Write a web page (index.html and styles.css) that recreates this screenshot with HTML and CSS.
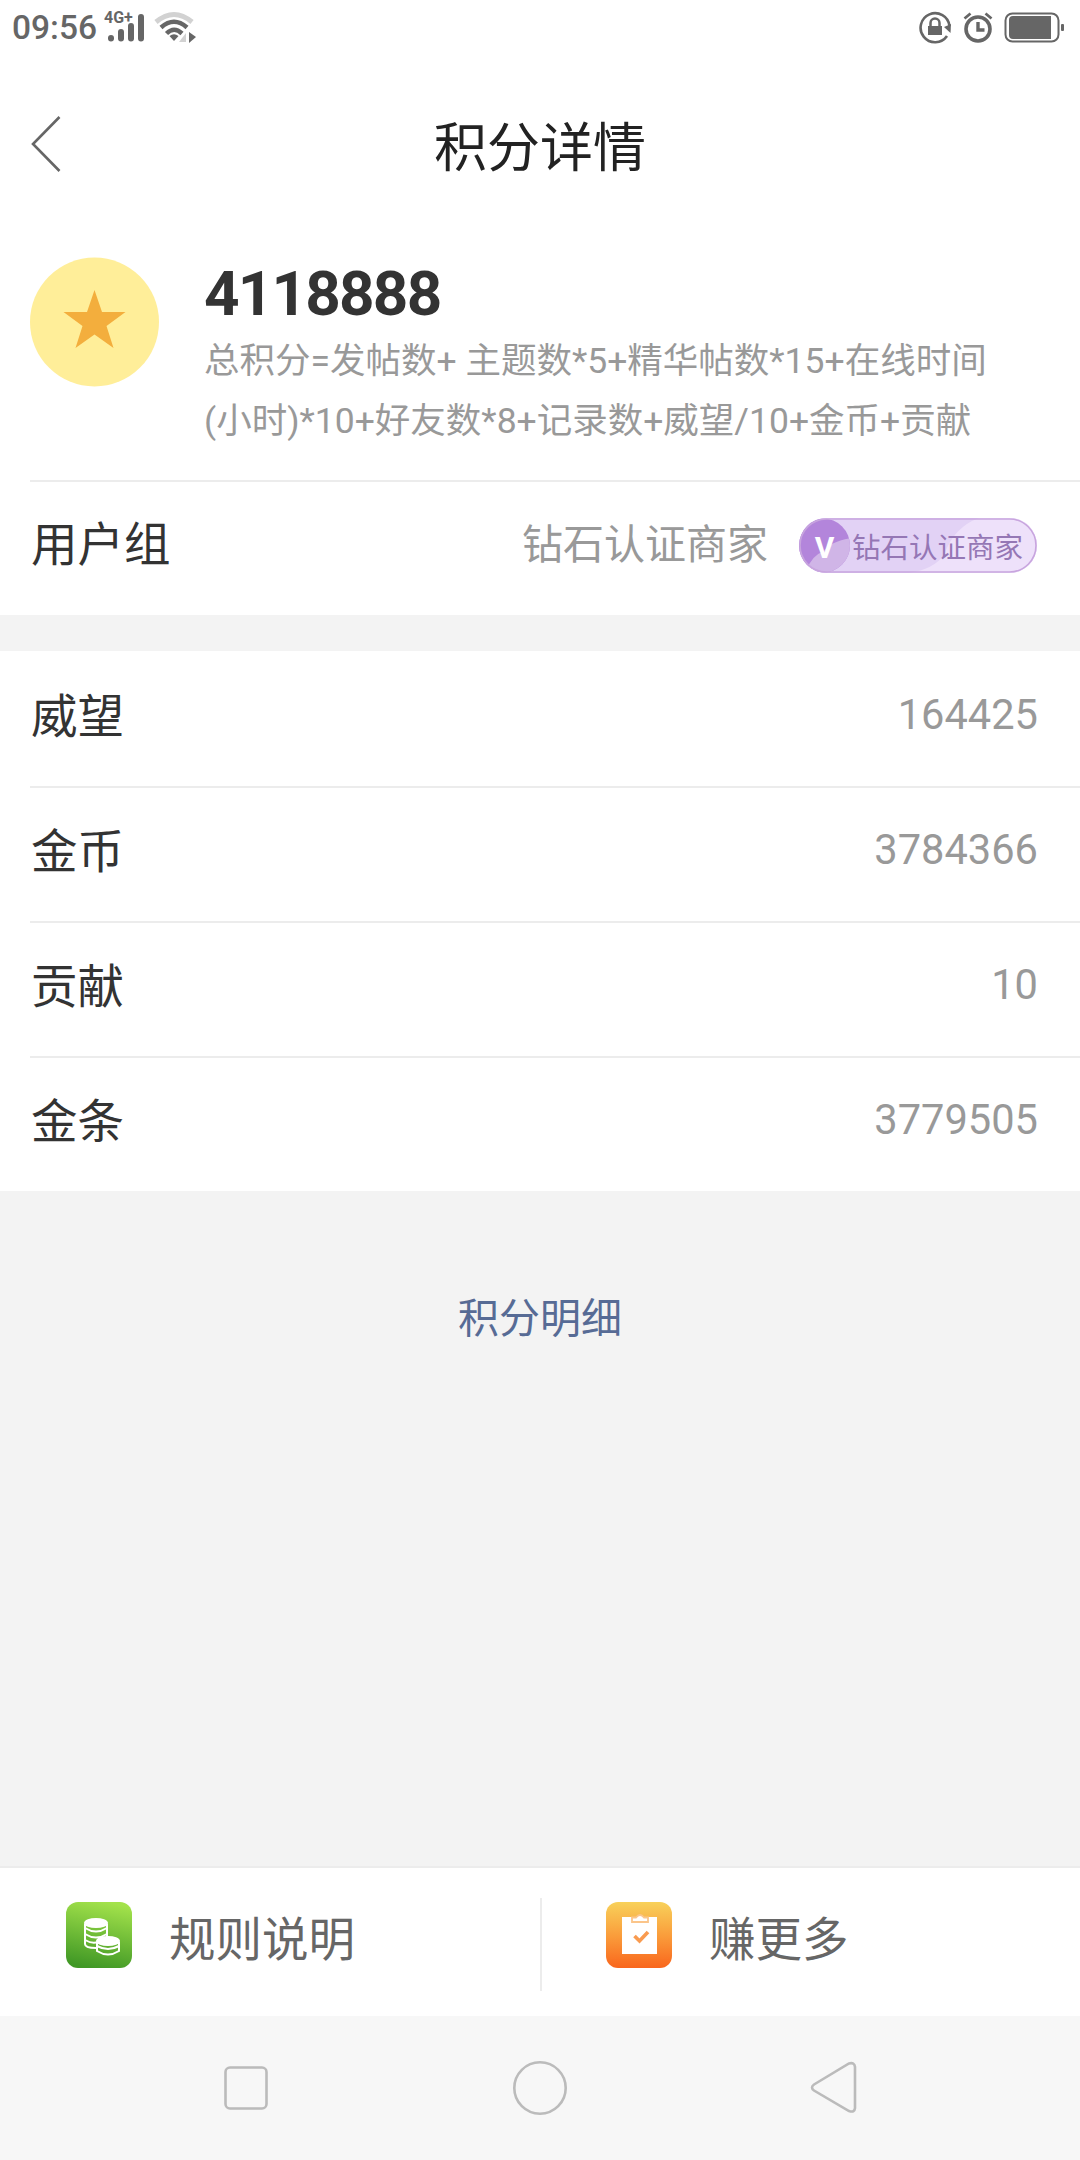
FILE: index.html
```
<!DOCTYPE html>
<html lang="zh-CN">
<head>
    <meta charset="UTF-8">
    <meta name="viewport" content="width=device-width, initial-scale=1.0">
    <title>积分详情</title>
    <link rel="stylesheet" href="styles.css">
</head>
<body>
    <div class="status-bar">
        <span class="time">09:56</span>
        <svg class="signal" width="46" height="46" viewBox="-2 -6 46 46">
            <text x="-1" y="12" class="net">4G+</text>
            <g stroke="#666" stroke-width="6" stroke-linecap="round">
                <path d="M6 27v.5M16 21v6.500M26 15v12.500M36 6v21.500"/>
            </g>
        </svg>
        <svg class="wifi" width="42" height="34" viewBox="0 0 42 34" fill="none">
            <path d="M2 11Q20 -4 38 11" stroke="#d2d2d2" stroke-width="5"/>
            <path d="M7 16.500Q20 5 33 16.500M12.500 22.500Q20 15 28 22.500" stroke="#666" stroke-width="4.500"/>
            <path d="M15.500 25Q20 21.500 24.500 25L20 30z" fill="#666"/>
            <path d="M25 31l7-9v9z" fill="#d2d2d2"/>
            <path d="M35 21l7 5-7 6z" fill="#666"/>
        </svg>
        <span class="space"></span>
        <svg class="lock" width="34" height="34" viewBox="0 0 34 34" fill="none">
            <path d="M29 25A14.500 14.500 0 1 1 31.500 15" stroke="#666" stroke-width="2.600"/>
            <path d="M26 16l6.500 6 .5-9z" fill="#666"/>
            <path d="M10 15h14v9H10z" fill="#666"/>
            <path d="M12.500 15v-3a4.500 4.500 0 0 1 9 0v3" stroke="#666" stroke-width="2.500"/>
        </svg>
        <svg class="alarm" width="30" height="34" viewBox="0 0 30 34" fill="none" stroke="#666">
            <circle cx="15" cy="18" r="12" stroke-width="3.600"/>
            <path d="M15 11v8h6.500" stroke-width="3.400"/>
            <path d="M1.500 7.500l6-5M28.500 7.500l-6-5" stroke-width="2.800"/>
        </svg>
        <svg class="battery" width="60" height="32" viewBox="0 0 60 32">
            <rect x="1.500" y="1.500" width="53" height="28" rx="7" fill="none" stroke="#666" stroke-width="2"/>
            <path d="M9 4h38v23H9q-4 0-4-4V8q0-4 4-4z" fill="#666"/>
            <rect x="57" y="12" width="3" height="7" rx="1" fill="#666"/>
        </svg>
    </div>

    <div class="header">
        <svg class="back" width="32" height="60" viewBox="0 0 32 60">
            <path d="M29.500 3L3 30l26.500 27" fill="none" stroke="#666" stroke-width="2.600"/>
        </svg>
        <h1>积分详情</h1>
    </div>

    <div class="summary">
        <svg class="star" width="130" height="130" viewBox="0 0 130 130">
            <circle cx="64.500" cy="65" r="64.500" fill="#ffee99"/>
            <path d="M64.500 33l7.500 22H95.500L76.500 69l7 22-19-13.500L45.500 91l7-22-19-14h23.500z" fill="#f3ae3d"/>
        </svg>
        <div class="summary-text">
            <div class="total">4118888</div>
            <div class="formula">总积分=发帖数+ 主题数*5+精华帖数*15+在线时间<br>(小时)*10+好友数*8+记录数+威望/10+金币+贡献</div>
        </div>
    </div>

    <div class="list group">
        <div class="row">
            <span class="label">用户组</span>
            <span class="value group-name">钻石认证商家</span>
            <svg class="badge" width="238" height="55" viewBox="0 0 238 55">
                <defs>
                    <clipPath id="pill"><rect width="238" height="55" rx="27.500"/></clipPath>
                    <clipPath id="disc"><circle cx="24" cy="27.500" r="27"/></clipPath>
                </defs>
                <g clip-path="url(#pill)">
                    <rect width="238" height="55" fill="#e2d2f5"/>
                    <path d="M110 55q25-4 35-18 10-28 35-37h58v55z" fill="#eee1fa"/>
                    <rect width="52" height="55" fill="#b385db" clip-path="url(#disc)"/>
                    <path d="M8 52q4-14 17-19 5-9 27-13v35H8z" fill="#d0b5e7" clip-path="url(#disc)"/>
                </g>
                <rect x="1" y="1" width="236" height="53" rx="26.500" fill="none" stroke="#c8a5de" stroke-width="1.600"/>
                <text x="25.500" y="39.500" class="badge-v">V</text>
                <text x="53" y="39.500" class="badge-text">钻石认证商家</text>
            </svg>
        </div>
    </div>

    <div class="list">
        <div class="row">
            <span class="label">威望</span>
            <span class="value">164425</span>
        </div>
        <div class="row">
            <span class="label">金币</span>
            <span class="value">3784366</span>
        </div>
        <div class="row">
            <span class="label">贡献</span>
            <span class="value">10</span>
        </div>
        <div class="row">
            <span class="label">金条</span>
            <span class="value">3779505</span>
        </div>
    </div>

    <div class="detail">
        <a class="detail-link">积分明细</a>
    </div>

    <div class="toolbar">
        <div class="tool">
            <svg width="66" height="66" viewBox="0 0 66 66">
                <defs>
                    <linearGradient id="green" x1=".6" y1="0" x2=".4" y2="1">
                        <stop offset="0" stop-color="#a3e24b"/>
                        <stop offset="1" stop-color="#409825"/>
                    </linearGradient>
                </defs>
                <rect width="66" height="66" rx="12" fill="url(#green)"/>
                <g fill="none" stroke="#fff" stroke-width="2">
                    <ellipse cx="30" cy="21" rx="11" ry="4" fill="#fff"/>
                    <path d="M19 22v20q0 4 11 4M41 22v13M19 26q11 7 22 0M19 32q11 7 22 0M19 38q7 4 13 2"/>
                    <ellipse cx="42" cy="39" rx="11" ry="4" fill="#fff"/>
                    <path d="M31 40v9q11 7 22 0v-9M31 44q11 6 22 0"/>
                </g>
            </svg>
            <span>规则说明</span>
        </div>
        <div class="tool">
            <svg width="66" height="66" viewBox="0 0 66 66">
                <defs>
                    <linearGradient id="orange" x1="0" y1="0" x2="0" y2="1">
                        <stop offset="0" stop-color="#f8d15a"/>
                        <stop offset=".5" stop-color="#fa9e3c"/>
                        <stop offset="1" stop-color="#f9661c"/>
                    </linearGradient>
                </defs>
                <rect width="66" height="66" rx="12" fill="url(#orange)"/>
                <path d="M16 15h35v37H16z" fill="#fff"/>
                <path d="M26 15.500h4q4-5 8 0h4v4.500H26z" fill="#fff" stroke="#fbc58a" stroke-width="1.800"/>
                <path d="M28.500 34l5 5 8.500-9" fill="none" stroke="#f99b50" stroke-width="3.600"/>
            </svg>
            <span>赚更多</span>
        </div>
    </div>

    <div class="nav-bar">
        <svg width="60" height="60" viewBox="0 0 60 60">
            <rect x="9.500" y="9.500" width="41" height="41" rx="4.500"/>
        </svg>
        <svg width="60" height="60" viewBox="0 0 60 60">
            <circle cx="30" cy="30" r="25.700"/>
        </svg>
        <svg width="60" height="60" viewBox="0 0 60 60">
            <path d="M10 26.500L45 5.500Q50.500 4 51 9v41q-.5 5-6 3L10 32.500q-4-3 0-6z"/>
        </svg>
    </div>
</body>
</html>
```

FILE: styles.css
```
* {
    box-sizing: border-box;
}

body {
    margin: 0;
    height: 2160px;
    display: flex;
    flex-direction: column;
    font-family: Roboto, "Noto Sans CJK SC", sans-serif;
    background-color: #f3f3f3;
    color: #333;
}

svg {
    display: block;
    flex-shrink: 0;
}

.status-bar {
    height: 56px;
    padding: 0 16px 0 12px;
    display: flex;
    align-items: center;
    background-color: #fff;
    color: #666;
}

.time {
    width: 91px;
    font-size: 33.5px;
    font-weight: 500;
    line-height: 58px;
}

.net {
    font-size: 16px;
    font-weight: 700;
    fill: #666;
}

.wifi {
    margin-left: 5px;
}

.space {
    flex: 1;
}

.lock {
    margin-right: 1px;
}

.alarm {
    margin-left: 10px;
}

.battery {
    margin-left: 11px;
    margin-top: -1px;
}

.header {
    height: 184px;
    padding: 0 30px;
    display: grid;
    grid-template-columns: 100px 1fr 100px;
    align-items: center;
    background-color: #fff;
}

.back {
    margin-bottom: 9px;
}

h1 {
    margin: 0 0 8px;
    text-align: center;
    font-size: 53px;
    font-weight: 400;
    color: #222;
}

.summary {
    height: 240px;
    padding: 17px 30px 0;
    display: flex;
    background-color: #fff;
}

.summary-text {
    margin-left: 44px;
    white-space: nowrap;
}

.total {
    height: 74px;
    font-size: 62px;
    line-height: 74px;
    font-weight: 700;
    letter-spacing: -1.8px;
}

.formula {
    font-size: 35.5px;
    line-height: 60px;
    color: #999;
}

.list {
    padding-left: 30px;
    background-color: #fff;
}

.row {
    height: 135px;
    padding: 0 42px 8px 0;
    display: flex;
    align-items: center;
}

.row + .row {
    padding-bottom: 10px;
    border-top: 2px solid #ececec;
}

.group {
    margin-bottom: 36px;
}

.group .row {
    padding: 0 43px 6px 0;
    border-top: 2px solid #ececec;
}

.label {
    flex: 1;
    margin-top: -5px;
    padding-left: 1px;
    font-size: 46.5px;
}

.group .label {
    margin-top: -10px;
}

.value {
    font-size: 41.6px;
    color: #999;
}

.group-name {
    margin-top: -10px;
    font-size: 41px;
}

.badge {
    margin-left: 31px;
}

.badge-v {
    font-size: 30px;
    font-weight: 700;
    text-anchor: middle;
    fill: #fff;
}

.badge-text {
    font-size: 28.5px;
    fill: #9577b5;
}

.detail {
    flex: 1;
    padding-top: 94px;
    text-align: center;
}

.detail-link {
    font-size: 41px;
    color: #576b95;
}

.toolbar {
    height: 150px;
    display: grid;
    grid-template-columns: 1fr 1fr;
    padding: 30px 0 25px;
    border-top: 2px solid #ececec;
    background-color: #fff;
}

.tool {
    height: 93px;
    padding: 4px 0 0 66px;
    display: flex;
    font-size: 46.5px;
    line-height: 77px;
    color: #666;
}

.tool + .tool {
    padding-left: 64px;
    border-left: 2px solid #ececec;
}

.tool span {
    margin-left: 37px;
}

.nav-bar {
    height: 144px;
    padding: 0 216px;
    display: flex;
    justify-content: space-between;
    align-items: center;
    background-color: #f7f7f7;
}

.nav-bar svg {
    fill: none;
    stroke: #bbb;
    stroke-width: 2.6;
}
```
